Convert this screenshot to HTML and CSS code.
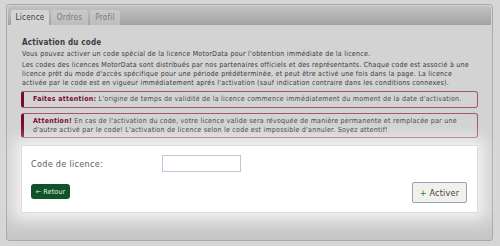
FILE: index.html
```html
<!DOCTYPE html>
<html lang="fr">
<head>
<meta charset="utf-8">
<link rel="stylesheet" href="styles.css">
</head>
<body>
<div class="panel">
  <div class="tabbar">
    <div class="tab active">Licence</div>
    <div class="tab">Ordres</div>
    <div class="tab">Profil</div>
  </div>
  <div class="content">
    <h1 class="title">Activation du code</h1>
    <p class="para">Vous pouvez activer un code spécial de la licence MotorData pour l'obtention immédiate de la licence.</p>
    <p class="para">Les codes des licences MotorData sont distribués par nos partenaires officiels et des représentants. Chaque code est associé à une licence prêt du mode d'accès spécifique pour une période prédéterminée, et peut être activé une fois dans la page. La licence activée par le code est en vigueur immédiatement aprés l'activation (sauf indication contraire dans les conditions connexes).</p>
    <div class="alert"><b>Faites attention:</b> L'origine de temps de validité de la licence commence immédiatement du moment de la date d'activation.</div>
    <div class="alert"><b>Attention!</b> En cas de l'activation du code, votre licence valide sera révoquée de manière permanente et remplacée par une d'autre activé par le code! L'activation de licence selon le code est impossible d'annuler. Soyez attentif!</div>
    <div class="formbox">
      <div class="row">
        <label class="label" for="code">Code de licence:</label>
        <input class="input" id="code" type="text">
      </div>
      <div class="actions">
        <button class="btn-back">← Retour</button>
        <button class="btn-activate"><span class="plus">+</span> Activer</button>
      </div>
    </div>
  </div>
</div>
</body>
</html>
```
FILE: styles.css
```css
html, body {
  margin: 0;
  padding: 0;
}
body {
  background: #d6d6d6;
  font-family: "DejaVu Sans Condensed", "DejaVu Sans", Verdana, sans-serif;
  font-stretch: condensed;
  width: 500px;
  height: 246px;
  overflow: hidden;
}
.panel {
  margin: 4px 0 0 6px;
  width: 483px;
  height: 233px;
  border: 1px solid #a9a9a9;
  border-radius: 3px;
  padding: 1px;
  background: linear-gradient(to bottom, #d3d3d3 0%, #d3d3d3 88%, #c6c6c6 100%);
}
.tabbar {
  height: 19px;
  border-radius: 3px 3px 0 0;
  background: linear-gradient(to bottom, #c2c2c2, #a3a3a3);
  display: flex;
  align-items: flex-end;
  gap: 2px;
  padding-left: 3px;
}
.tab {
  height: 15px;
  box-sizing: border-box;
  font-size: 8px;
  letter-spacing: 0.25px;
  line-height: 15px;
  color: #7a7a7a;
  background: linear-gradient(to bottom, #c9c9c9, #bdbdbd);
  border-radius: 2px 2px 0 0;
  text-align: center;
}
.tab:nth-child(1) { width: 38px; }
.tab:nth-child(2) { width: 37px; }
.tab:nth-child(3) { width: 30px; }
.tab.active {
  background: #d4d4d4;
  color: #3a3a3a;
}
.content {
  padding: 12px 0 0 14px;
}
.title {
  margin: 0 0 1px 0;
  font-size: 8px;
  letter-spacing: 0.2px;
  font-weight: bold;
  color: #3c3c3c;
  line-height: 12px;
}
.para {
  margin: 0;
  font-size: 7px;
  letter-spacing: 0.25px;
  line-height: 9px;
  color: #3a3a3a;
  width: 455px;
}
.para:first-of-type {
  margin-top: 1px;
}
.para + .para {
  margin-top: 2px;
}
.alert {
  width: 457px;
  box-sizing: border-box;
  margin: 3px 0 0 -1px;
  border: 1px solid #a4566f;
  border-left: 3px solid #7a0a30;
  border-radius: 3px;
  padding: 3px 9px;
  font-size: 7px;
  letter-spacing: 0.25px;
  line-height: 9px;
  color: #4a4a4a;
}
.alert + .alert {
  margin-top: 5px;
  padding-bottom: 2px;
}
.alert b {
  color: #7a0a30;
}
.formbox {
  width: 457px;
  height: 68px;
  box-sizing: border-box;
  margin: 7px 0 0 -1px;
  background: #ffffff;
  border: 1px solid #dcdcdc;
  box-shadow: 0 0 14px 6px rgba(255, 255, 255, 0.75);
  padding: 9px 10px 0 9px;
}
.row {
  display: flex;
  align-items: center;
  height: 17px;
}
.label {
  width: 131px;
  font-size: 9px;
  letter-spacing: 0.3px;
  color: #5a5a5a;
}
.input {
  width: 79px;
  height: 17px;
  box-sizing: border-box;
  border: 1px solid #b9c8d6;
  padding: 0;
  margin: 0;
}
.actions {
  display: flex;
  justify-content: space-between;
  align-items: flex-start;
  margin-top: 10px;
}
.btn-back {
  margin-top: 2px;
  width: 39px;
  height: 15px;
  border: none;
  border-radius: 3px;
  background: #0e5426;
  color: #e8f0e8;
  font-family: inherit;
  font-stretch: condensed;
  font-size: 7px;
  letter-spacing: 0.2px;
  padding: 0;
}
.btn-activate {
  width: 55px;
  height: 21px;
  border: 1px solid #8ea6bf;
  border-radius: 2px;
  background: #f1f0eb;
  color: #444;
  font-family: inherit;
  font-stretch: condensed;
  font-size: 9px;
  letter-spacing: 0.2px;
  padding: 0;
}
.plus {
  color: #2f7a3a;
}
```
